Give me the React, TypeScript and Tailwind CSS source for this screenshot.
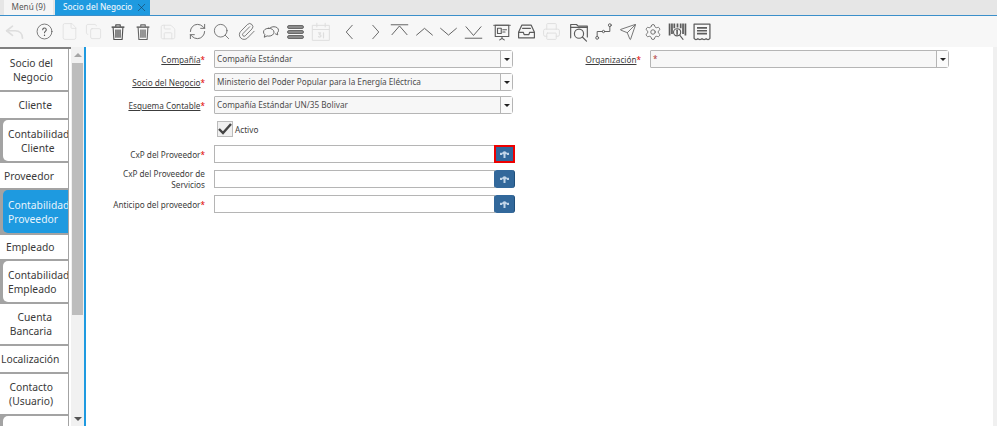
import React from 'react';
import { File, Copy, Save, RefreshCw, Search, Paperclip, Printer, Send, Settings, X } from 'lucide-react';

const Ico: React.FC<{ children: React.ReactNode; off?: boolean; sw?: number; size?: number }> = ({ children, off, sw = 1.2, size = 18 }) => (
    <svg width={size} height={size} viewBox="0 0 24 24" fill="none" stroke={off ? '#dedede' : '#5c5c5c'} strokeWidth={sw} strokeLinecap="round" strokeLinejoin="round">{children}</svg>
);

const Trash: React.FC<{ color: string }> = ({ color }) => (
    <svg width="18" height="18" viewBox="0 0 24 24" fill="none" stroke={color} strokeWidth="1.500" strokeLinejoin="round">
        <path d="M3.500 5.500h17" strokeWidth="2" />
        <path d="M9 5V2.500h6V5" />
        <path d="M5.500 6l1 16h11l1-16" />
        <path d="M9.300 8.500v11M12 8.500v11M14.700 8.500v11" strokeWidth="1.800" />
    </svg>
);

const tools: { cls: string; el: React.ReactNode }[] = [
    { cls: 'ml-[2.500px]', el: <Ico off sw={2} size={20}><path d="M9 5 2 10.500 9 16" /><path d="M2 10.500h10c5.500 0 9 3.500 9 9" /></Ico> },
    { cls: 'ml-[5px]', el: <Ico sw={1.100} size={17}><circle cx="12" cy="12" r="10.500" /><path d="M9.500 9.500a2.500 2.500 0 1 1 4 2c-1 .8-1.500 1.200-1.500 2.300" strokeWidth="1.500" /><path d="M12 17.200v.3" strokeWidth="1.800" /></Ico> },
    { cls: '', el: <File size={19} strokeWidth={1} color="#dedede" /> },
    { cls: '', el: <Copy size={17} strokeWidth={1.100} color="#dedede" /> },
    { cls: '', el: <Trash color="#505050" /> },
    { cls: '', el: <Trash color="#666666" /> },
    { cls: '', el: <Save size={18} strokeWidth={1.100} color="#dedede" /> },
    { cls: 'ml-[5px]', el: <RefreshCw size={19} strokeWidth={1.100} color="#5c5c5c" /> },
    { cls: '', el: <Search size={19} strokeWidth={1} color="#5c5c5c" /> },
    { cls: '', el: <Paperclip size={19} strokeWidth={1} color="#5c5c5c" /> },
    { cls: '', el: <Ico><path d="M9 7c-4 0-7 2.200-7 5 0 1.300.6 2.500 1.800 3.400L3 19l3.800-1.800c.7.200 1.400.300 2.200.300 4 0 7-2.400 7-5.200S13 7 9 7Z" /><path d="M11 6.500C12 5.500 14 5 16 5c3.500 0 6 2 6 4.800 0 1.400-.6 2.500-1.600 3.300l.6 2.700-3-1.300" /></Ico> },
    { cls: '', el: <svg width="17" height="16" viewBox="0 0 17 16" fill="#8c8c8c" stroke="#555" strokeWidth="0.800"><rect x="0.500" y="1.500" width="16" height="3" rx="1.500" /><rect x="0.500" y="6.500" width="16" height="3" rx="1.500" /><rect x="0.500" y="11.500" width="16" height="3" rx="1.500" /></svg> },
    { cls: '', el: <Ico off sw={1.200} size={20}><rect x="2" y="4" width="20" height="18" /><path d="M2 9h20M7 1.500V6M17 1.500V6" /><path d="M9 13h2.500l-1.500 2c1.500 0 2 .8 2 1.500 0 1.500-2 2-3 1M15 13v6" strokeWidth="1.500" /></Ico> },
    { cls: 'ml-[5px]', el: <Ico size={18}><path d="M15 3 7 12l8 9" /></Ico> },
    { cls: '', el: <Ico size={18}><path d="m9 3 8 9-8 9" /></Ico> },
    { cls: '', el: <Ico size={19}><path d="M1.500 3.500h21" /><path d="M2.500 16 12 5l9.500 11" /></Ico> },
    { cls: '', el: <Ico size={19}><path d="M2 16.500 12 8l10 8.500" /></Ico> },
    { cls: '', el: <Ico size={19}><path d="M2 8l10 8.500L22 8" /></Ico> },
    { cls: '', el: <Ico size={19}><path d="M2.500 6 12 17l9.500-11" /><path d="M1.500 20.500h21" /></Ico> },
    { cls: 'ml-[4px]', el: <Ico sw={1.500}><rect x="3" y="3" width="18" height="15" /><path d="M1 3h22M12 18v3M9 22.500l3-2 3 2" /><rect x="6" y="7" width="5" height="7" /><path d="M13 9h5M13 12h3" /></Ico> },
    { cls: '', el: <Ico sw={1.500} size={19}><path d="M6 4h12l4 9v7H2v-7Z" /><path d="M2 13h6l1 3h6l1-3h6" /><path d="M7 8h10" /></Ico> },
    { cls: '', el: <Printer size={19} strokeWidth={1.200} color="#dedede" /> },
    { cls: 'ml-[3px]', el: <Ico sw={1.400} size={20}><path d="M2 19V3h7l2 2h11v13" /><path d="M2 6.500h20" /><circle cx="12" cy="14" r="5.500" /><path d="m16 18 5 5" /></Ico> },
    { cls: '', el: <Ico size={19}><circle cx="4" cy="20" r="1.800" /><circle cx="20" cy="4" r="1.800" /><circle cx="12" cy="12" r="1.500" /><path d="M4 18v-6h6.500M13.500 12H20V6" /></Ico> },
    { cls: '', el: <Send size={18} strokeWidth={1.100} color="#5c5c5c" /> },
    { cls: '', el: <Settings size={18} strokeWidth={1.100} color="#5c5c5c" /> },
    { cls: '', el: <Ico sw={1.400} size={19}><path d="M2 2v15M5 2v13M8 2v6M12 2v5M16 2v6M19 2v13M22 2v15" strokeWidth="2.200" strokeLinecap="butt" /><circle cx="11.500" cy="13" r="4.500" /><path d="M11.500 10.500v5" strokeWidth="2" /><path d="m15 17 4 5" /></Ico> },
    { cls: '', el: <Ico sw={1.500} size={20}><path d="M2.500 2.500h19v17c-1.500 2-3 2-4.500.5-1.500 1.500-3.500 1.500-5 0-1.500 1.500-3.500 1.500-5 0-1.500 1.500-3 1.500-4.500-.5Z" /><path d="M6 7h12M6 10.500h12M6 14h12" strokeWidth="2" strokeLinecap="butt" /></Ico> },
];

type Tab = { lines: { t: string; cls?: string }[]; cls: string; align: string; sub?: boolean; active?: boolean };

const tabs: Tab[] = [
    { lines: [{ t: 'Socio del' }, { t: 'Negocio' }], cls: 'h-[43px]', align: 'items-end pr-[15px]' },
    { lines: [{ t: 'Cliente' }], cls: 'h-[28px]', align: 'items-end pr-[16px]' },
    { lines: [{ t: 'Contabilidad' }, { t: 'Cliente', cls: 'ml-[13px]' }], cls: 'h-[43px]', align: 'items-start pl-[5px]', sub: true },
    { lines: [{ t: 'Proveedor' }], cls: 'h-[27px]', align: 'items-start pl-[4px]' },
    { lines: [{ t: 'Contabilidad' }, { t: 'Proveedor' }], cls: 'h-[45px]', align: 'items-start pl-[5px]', sub: true, active: true },
    { lines: [{ t: 'Empleado' }], cls: 'h-[26px]', align: 'items-start pl-[6px]' },
    { lines: [{ t: 'Contabilidad' }, { t: 'Empleado' }], cls: 'h-[43px]', align: 'items-start pl-[5px]', sub: true },
    { lines: [{ t: 'Cuenta' }, { t: 'Bancaria' }], cls: 'h-[42px]', align: 'items-end pr-[16px]' },
    { lines: [{ t: 'Localización' }], cls: 'h-[28px]', align: 'items-start pl-[1px]' },
    { lines: [{ t: 'Contacto' }, { t: '(Usuario)' }], cls: 'h-[42px]', align: 'items-end pr-[15px]' },
    { lines: [], cls: 'h-[20px]', align: '', sub: true },
];

const Label: React.FC<{ text: string[]; req?: boolean; link?: boolean; w?: string }> = ({ text, req, link, w = 'w-[119px]' }) => (
    <div className={`shrink-0 whitespace-nowrap text-right text-[8.200px] leading-[11px] text-[#3c3c3c] ${w}`}>
        {text.map((t, i) => (
            <div key={t}>
                <span className={link ? 'underline' : ''}>{t}</span>
                {req && i === text.length - 1 && <span className="text-[#e00000]">*</span>}
            </div>
        ))}
    </div>
);

const Combo: React.FC<{ value: string; star?: boolean }> = ({ value, star }) => (
    <div className="ml-[9px] flex h-[18px] w-[299px] shrink-0 items-center rounded-r-[3px] rounded-l-[1px] border border-[#b5b5b5] bg-[#f7f7f7]">
        <div className={`min-w-0 flex-1 truncate pl-[2px] text-[8.200px] ${star ? 'text-[#b03a3a]' : 'text-[#4c4c4c]'}`}>{value}</div>
        <div className="flex h-full w-[12px] items-center justify-center border-l border-[#b5b5b5] bg-[#fbfbfb]">
            <div className="h-0 w-0 border-x-[3px] border-t-[3px] border-x-transparent border-t-[#222]" />
        </div>
    </div>
);

const Row: React.FC<{ mt: string; children: React.ReactNode }> = ({ mt, children }) => <div className={`flex h-[18px] items-center ${mt}`}>{children}</div>;

const Lookup: React.FC<{ selected?: boolean }> = ({ selected }) => (
    <div className="ml-[9px] flex">
        <div className="h-[18px] w-[281px] border border-[#b5b5b5] bg-white" />
        <div className={`-ml-[1px] flex h-[18px] w-[21px] items-center justify-center bg-[#32689b] ${selected ? 'border-2 border-[#ee0000]' : 'rounded-[3px] border-r border-[#1f4f7a]'}`}>
            <svg width="9" height="7" viewBox="0 0 9 7" fill="#c2d5e8">
                <path d="M2 3.200C2 -.6 7 -.6 7 3.200Z" />
                <rect x="0" y="1.800" width="2" height="2.200" />
                <rect x="7" y="1.800" width="2" height="2.200" />
                <rect x="3.500" y="3" width="2" height="4" />
            </svg>
        </div>
    </div>
);

const App: React.FC = () => (
    <div className="flex h-[426px] w-[997px] flex-col overflow-hidden bg-white font-['Noto_Sans','Open_Sans',sans-serif]">
        <div className="flex h-[16px] shrink-0 items-start border-b border-[#3b8fca] bg-[#e6e6e6] pl-[4px]">
            <div className="flex h-[15px] w-[49px] items-center justify-center whitespace-nowrap bg-[#f5f5f5] text-[8.200px] text-[#555]">Menú (9)</div>
            <div className="ml-[2px] flex h-[15px] w-[95px] items-center whitespace-nowrap bg-[#1e9ae0] pl-[8px] text-[8.200px] font-medium text-[#e8f4fc]">
                Socio del Negocio
                <X size={13} strokeWidth={1.100} color="#1a3b57" className="ml-[3px] shrink-0" />
            </div>
        </div>
        <div className="flex h-[31px] shrink-0 items-center bg-[#f7f7f7]">
            {tools.map((t, i) => (
                <div key={i} className={`flex w-[24.650px] shrink-0 items-center justify-center ${t.cls}`}>{t.el}</div>
            ))}
        </div>
        <div className="flex min-h-0 flex-1">
            <div className="flex w-[71px] shrink-0 flex-col overflow-hidden border-t-2 border-[#808080]">
                {tabs.map((t, i) => (
                    <div key={i} className={`mr-[2px] shrink-0 border-b-[2px] border-r-[1px] border-[#a3a3a3] ${t.cls} ${t.sub ? 'bg-[#a3a3a3] pl-[3px]' : 'bg-white'}`}>
                        <div className={`flex h-full flex-col justify-center overflow-hidden text-[10.300px] leading-[14px] ${t.sub ? 'rounded-l-[5px]' : ''} ${t.active ? 'bg-[#1e9ae0] text-[#e8f4fc]' : 'bg-white text-[#3a3a3a]'} ${t.align}`}>
                            {t.lines.map(l => <span key={l.t} className={`whitespace-nowrap ${l.cls ?? ''}`}>{l.t}</span>)}
                        </div>
                    </div>
                ))}
            </div>
            <div className="flex w-[13px] shrink-0 flex-col bg-[#f1f1f1]">
                <div className="flex h-[16px] items-center justify-center">
                    <div className="h-0 w-0 border-x-[4px] border-b-[4px] border-x-transparent border-b-[#a5a5a5]" />
                </div>
                <div className="mx-auto h-[252px] w-[11px] bg-[#bdbdbd]" />
                <div className="flex-1" />
                <div className="flex h-[14px] items-center justify-center">
                    <div className="h-0 w-0 border-x-[4px] border-t-[4px] border-x-transparent border-t-[#555]" />
                </div>
            </div>
            <div className="w-[2px] shrink-0 bg-[#1e9ae0]" />
            <div className="min-w-0 flex-1 pt-[3px]">
                <Row mt="mt-0">
                    <Label text={['Compañía']} req link />
                    <Combo value="Compañía Estándar" />
                    <Label text={['Organización']} req link w="w-[128px]" />
                    <Combo value="*" star />
                </Row>
                <Row mt="mt-[5px]">
                    <Label text={['Socio del Negocio']} req link />
                    <Combo value="Ministerio del Poder Popular para la Energía Eléctrica" />
                </Row>
                <Row mt="mt-[5px]">
                    <Label text={['Esquema Contable']} req link />
                    <Combo value="Compañía Estándar UN/35 Bolivar" />
                </Row>
                <Row mt="mt-[6px]">
                    <div className="ml-[131px] flex items-center gap-[2px]">
                        <div className="flex h-[16px] w-[16px] items-center justify-center border border-[#bbb] bg-[#f0f0f0]">
                            <svg width="14" height="12" viewBox="0 0 14 12" fill="none" stroke="#444" strokeWidth="2.400"><path d="m1 6 4 4 8-9" /></svg>
                        </div>
                        <span className="mt-[2px] text-[8.200px] text-[#3c3c3c]">Activo</span>
                    </div>
                </Row>
                <Row mt="mt-[7px]">
                    <Label text={['CxP del Proveedor']} req />
                    <Lookup selected />
                </Row>
                <Row mt="mt-[7px]">
                    <Label text={['CxP del Proveedor de', 'Servicios']} />
                    <Lookup />
                </Row>
                <Row mt="mt-[7px]">
                    <Label text={['Anticipo del proveedor']} req />
                    <Lookup />
                </Row>
            </div>
            <div className="w-[4px] shrink-0 bg-[#f0f0f0]" />
        </div>
    </div>
);

export default App;
